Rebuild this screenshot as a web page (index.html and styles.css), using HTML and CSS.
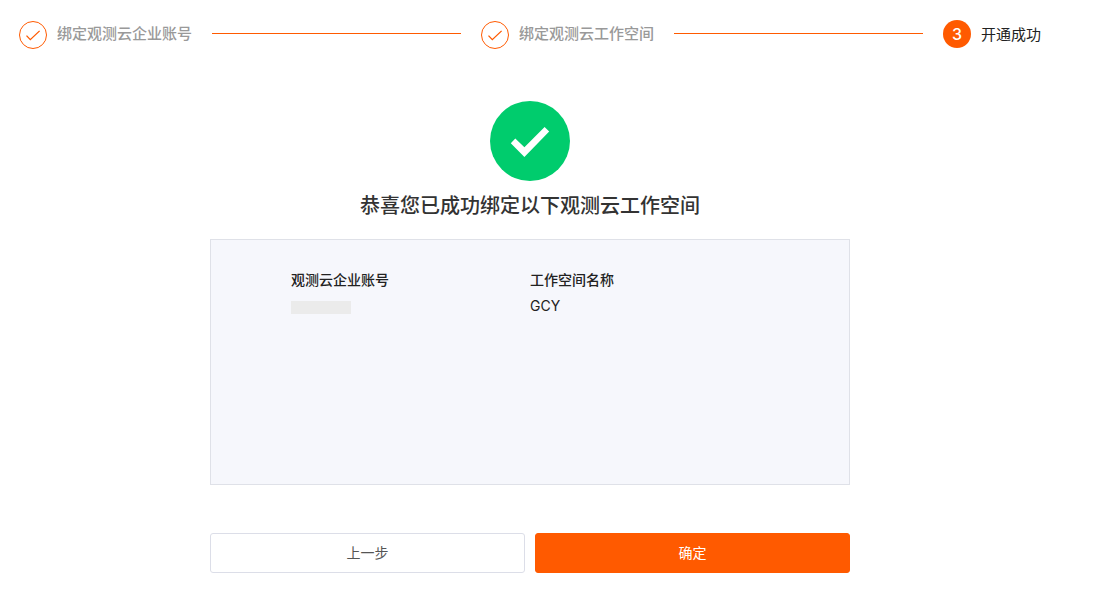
FILE: index.html
```html
<!DOCTYPE html>
<html lang="zh-CN">
<head>
<meta charset="UTF-8">
<meta name="viewport" content="width=device-width, initial-scale=1.0">
<title>开通成功</title>
<link rel="stylesheet" href="styles.css">
</head>
<body>
<ol class="steps">
  <li class="step done">
    <svg class="step-icon" viewBox="0 0 28 28" aria-hidden="true">
      <circle cx="14" cy="14" r="13.5"/>
      <path d="M7.5 14.6l3.8 4 9.3-8.7" stroke-width="1.3"/>
    </svg>
    <span class="step-title">绑定观测云企业账号</span>
  </li>
  <li class="step done">
    <svg class="step-icon" viewBox="0 0 28 28" aria-hidden="true">
      <circle cx="14" cy="14" r="13.5"/>
      <path d="M7.5 14.6l3.8 4 9.3-8.7" stroke-width="1.3"/>
    </svg>
    <span class="step-title">绑定观测云工作空间</span>
  </li>
  <li class="step active" aria-current="step">
    <span class="step-number">3</span>
    <span class="step-title">开通成功</span>
  </li>
</ol>

<main class="result">
  <svg class="success-icon" viewBox="0 0 80 80" aria-hidden="true">
    <circle cx="40" cy="40" r="40" fill="#00cc6d"/>
    <path d="M20.8 42.2l4.5-4.7 9.1 8.8L54.6 26l4.6 4.5-24.8 25.6z" fill="#fff"/>
  </svg>
  <h1 class="result-title">恭喜您已成功绑定以下观测云工作空间</h1>
  <dl class="info">
    <div class="info-item">
      <dt>观测云企业账号</dt>
      <dd><span class="masked"></span></dd>
    </div>
    <div class="info-item">
      <dt>工作空间名称</dt>
      <dd>GCY</dd>
    </div>
  </dl>
  <div class="actions">
    <button type="button" class="btn">上一步</button>
    <button type="button" class="btn btn-primary">确定</button>
  </div>
</main>
</body>
</html>
```
FILE: styles.css
```css
* {
  box-sizing: border-box;
}
body {
  margin: 0;
  padding: 20px 65px 36px 19px;
  font-family: Inter, "Noto Sans CJK SC", sans-serif;
  font-size: 14px;
  line-height: 20px;
  color: #222;
  background-color: #fff;
}
.steps {
  display: flex;
  gap: 20px;
  margin: 0;
  padding: 0;
  list-style: none;
}
.step {
  display: flex;
  align-items: flex-start;
  gap: 10px;
  font-size: 15px;
  line-height: 28px;
  white-space: nowrap;
}
.step.done {
  flex: 1 0 auto;
  font-weight: 500;
  color: #999;
}
.step.done::after {
  content: "";
  flex: 1;
  height: 1px;
  margin: 13px 0 0 10px;
  background-color: #ff5a00;
}
.step.active .step-title {
  line-height: 30px;
}
.step-icon {
  width: 28px;
  height: 28px;
  margin-top: 1px;
  fill: none;
  stroke: #ff5a00;
}
.step-number {
  width: 28px;
  height: 28px;
  border-radius: 50%;
  background-color: #ff5a00;
  color: #fff;
  font-size: 16px;
  font-weight: 500;
  text-align: center;
}
.result {
  max-width: 640px;
  margin: 51px auto 0;
}
.success-icon {
  display: block;
  width: 80px;
  height: 80px;
  margin: 0 auto;
}
.result-title {
  margin: 8px 0 16px;
  font-size: 20px;
  font-weight: 500;
  line-height: 34px;
  text-align: center;
  color: #333;
}
.info {
  display: grid;
  grid-template-columns: 1fr 1fr;
  min-height: 246px;
  margin: 0;
  padding: 30px 80px;
  border: 1px solid #dfe1e8;
  background-color: #f6f7fc;
}
.info dt {
  font-weight: 500;
}
.info dd {
  margin: 6px 0 0;
}
.masked {
  display: block;
  width: 60px;
  height: 13px;
  margin-top: 11px;
  background-color: #ebebeb;
}
.actions {
  display: flex;
  gap: 10px;
  margin-top: 48px;
}
.btn {
  flex: 1;
  height: 40px;
  border: 1px solid #dcdee8;
  border-radius: 3px;
  background-color: #fff;
  color: #555;
  font: inherit;
  cursor: pointer;
}
.btn-primary {
  border-color: #ff5a00;
  background-color: #ff5a00;
  color: #fff;
}
```
